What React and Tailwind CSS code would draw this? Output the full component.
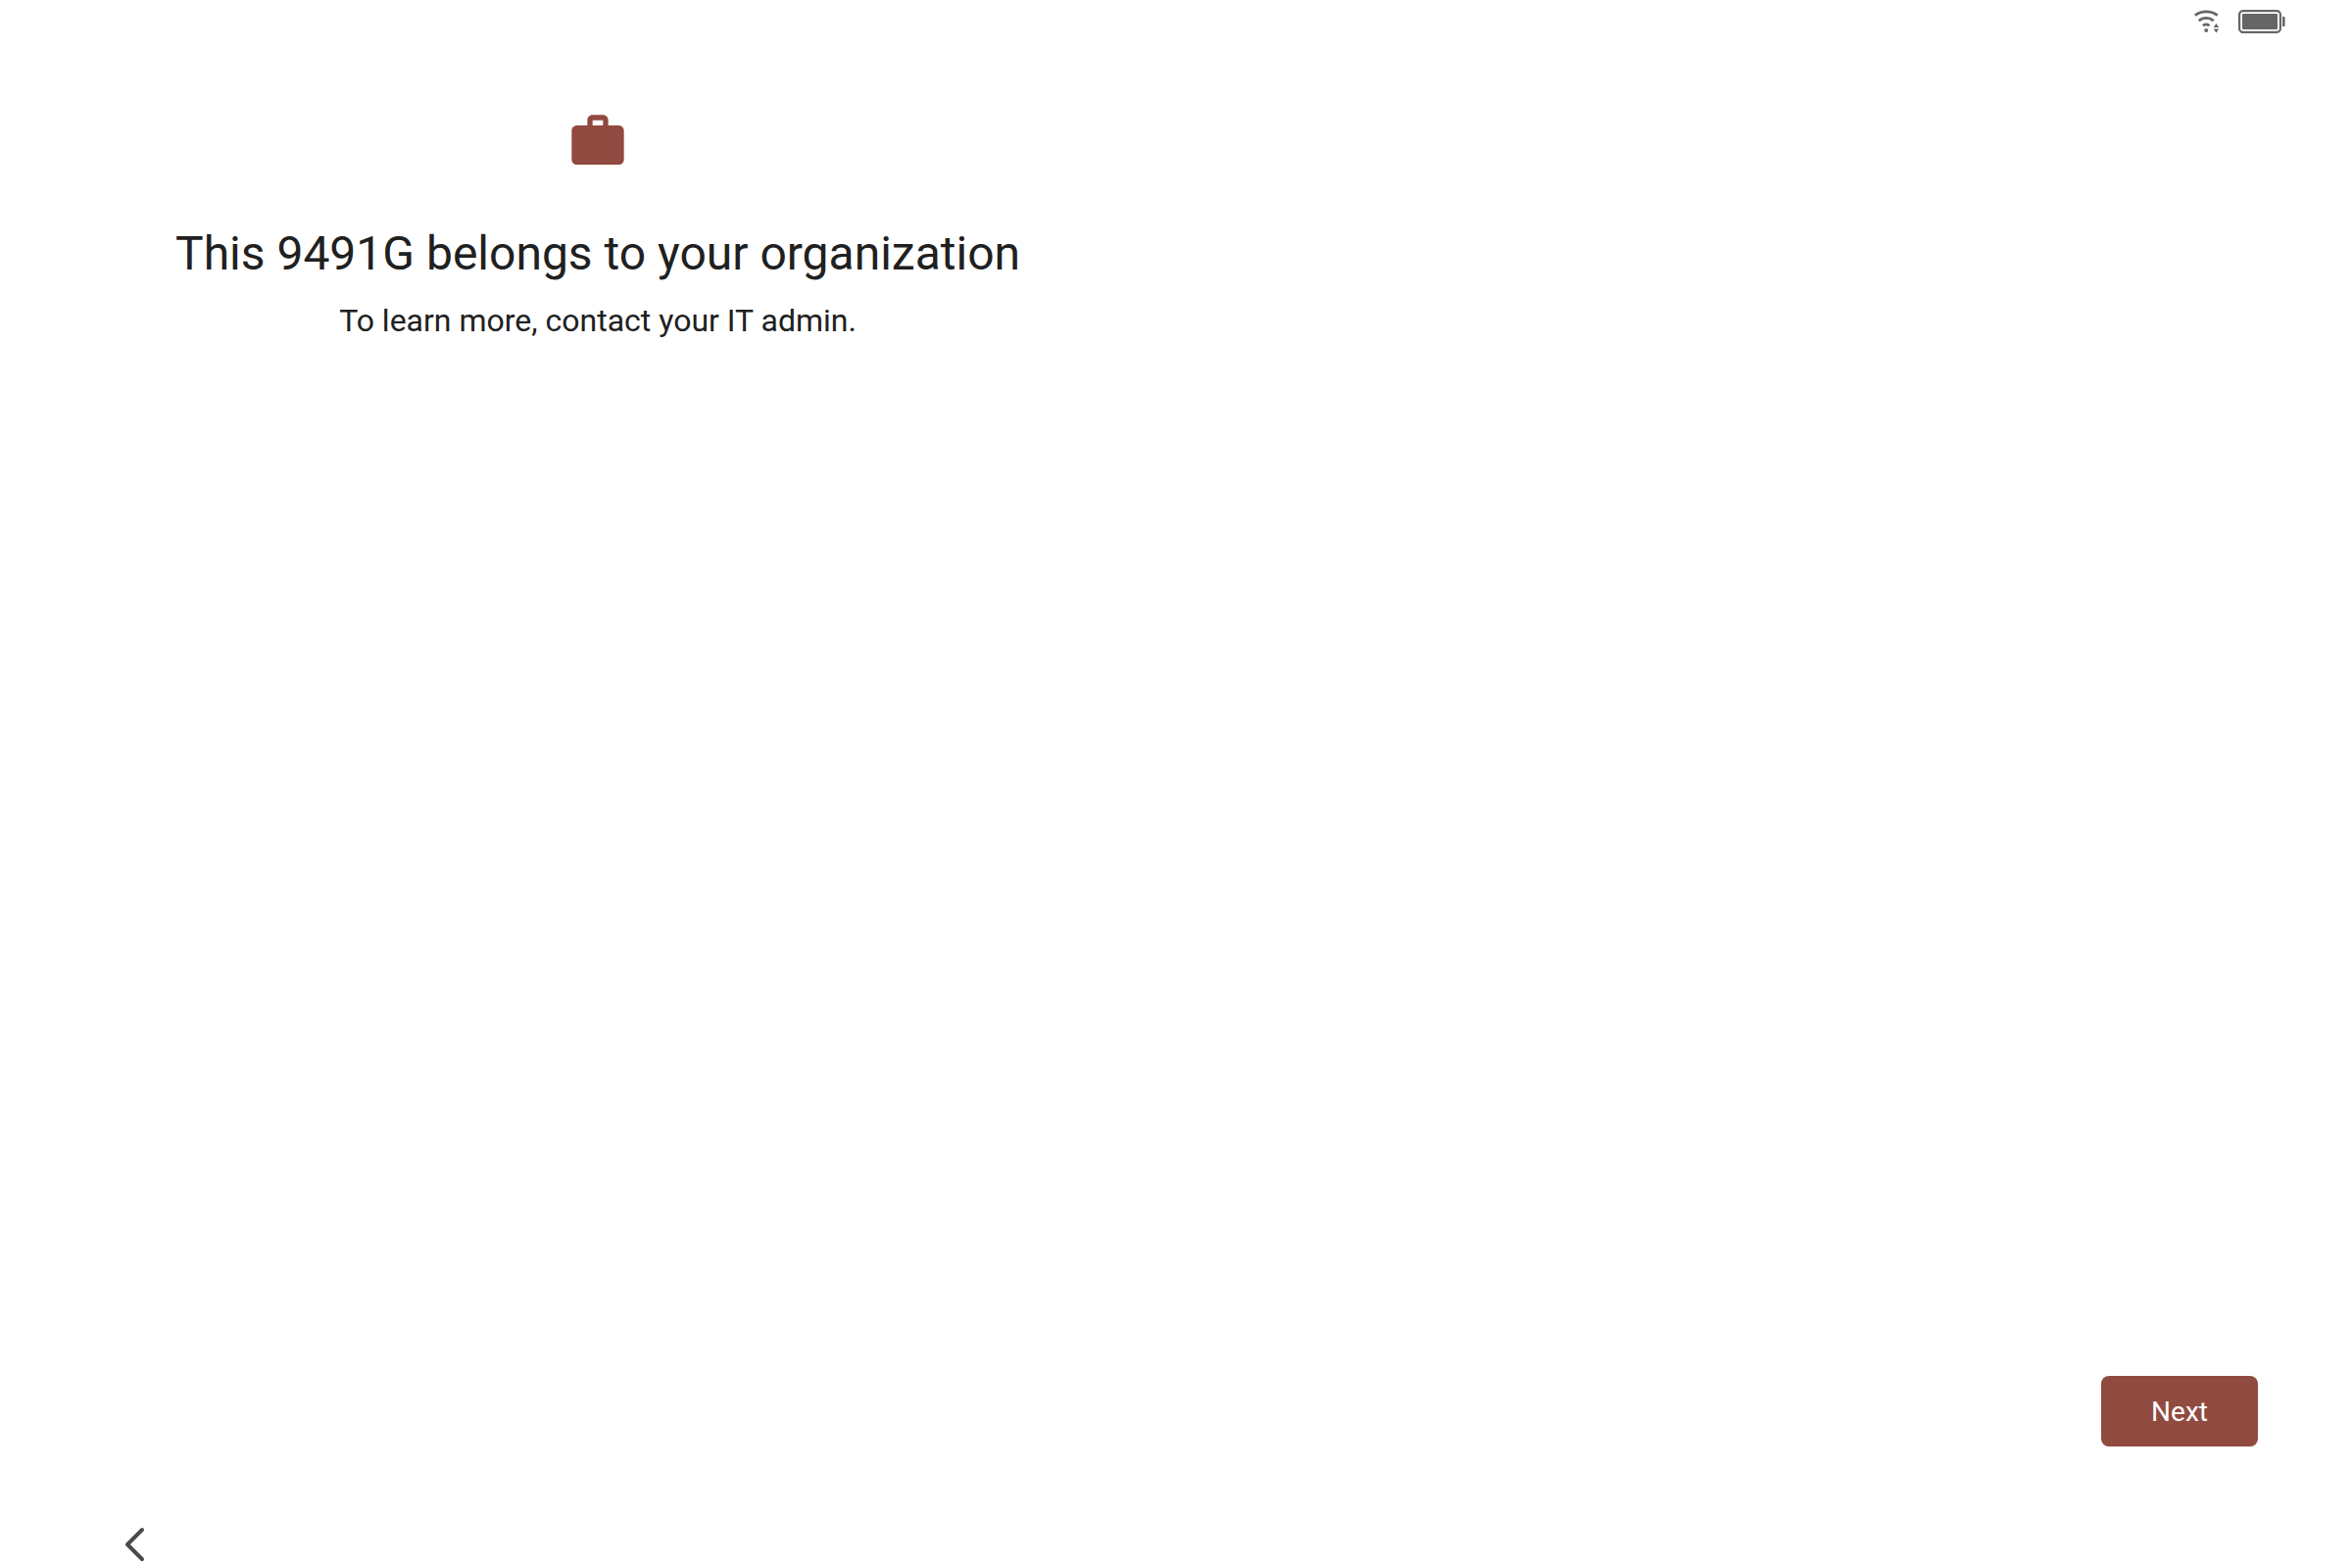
import React from "react";

function WifiIcon() {
  return (
    <svg className="w-8 h-8" viewBox="0 0 32 32" fill="none" stroke="#666666" role="img" aria-label="Wi-Fi connected">
      <path d="M3.8 9.6a20 20 0 0 1 23 0" strokeWidth="2.8" />
      <path d="M7.7 15.1a11.5 11.5 0 0 1 15 0" strokeWidth="2.8" />
      <path d="M12 20.2a4.4 4.4 0 0 1 6.4 0" strokeWidth="2.8" />
      <circle cx="15.2" cy="25" r="2" fill="#666666" stroke="none" />
      <path d="M25.4 18l2.7 4h-5.4zM25.4 27.5l2.7-4h-5.4z" fill="#666666" stroke="none" />
    </svg>
  );
}

function BatteryIcon() {
  return (
    <svg className="w-12 h-8" viewBox="0 0 48 32" role="img" aria-label="Battery full">
      <rect x="1.1" y="5.1" width="41.8" height="21.8" rx="3.6" fill="none" stroke="#666666" strokeWidth="2.2" />
      <rect x="4" y="8" width="36" height="16" rx="1" fill="#666666" />
      <path d="M45 11h1.6a1 1 0 0 1 1 1v8a1 1 0 0 1-1 1H45z" fill="#666666" />
    </svg>
  );
}

function WorkIcon() {
  return (
    <svg className="w-16 h-16" viewBox="0 0 24 24" fill="#904a40" aria-hidden="true">
      <path d="M20 6h-4V4c0-1.11-.89-2-2-2h-4c-1.11 0-2 .89-2 2v2H4c-1.11 0-2 .89-2 2v11c0 1.11.89 2 2 2h16c1.11 0 2-.89 2-2V8c0-1.11-.89-2-2-2zM14 6h-4V4h4v2z" />
    </svg>
  );
}

function App() {
  return (
    <div className="flex flex-col min-h-screen bg-white font-['Roboto',sans-serif] text-[#202020]">
      {/* Status bar */}
      <header className="flex items-center justify-end gap-4 h-11 pr-17">
        <WifiIcon />
        <BatteryIcon />
      </header>

      {/* Message */}
      <main className="flex-1 w-1/2 flex flex-col items-center pt-17 pl-12 pr-7 text-center">
        <WorkIcon />
        <h1 className="mt-13 text-5xl leading-[62px]">This 9491G belongs to your organization</h1>
        <p className="mt-4 text-[32px] leading-[42px]">To learn more, contact your IT admin.</p>
      </main>

      {/* Bottom actions */}
      <div className="flex justify-end px-24 pb-19">
        <button type="button" className="w-40 h-18 pt-0.5 rounded-lg bg-[#904a40] text-white text-[28px]">
          Next
        </button>
      </div>

      {/* Navigation bar */}
      <nav className="flex items-center h-12 px-28">
        <button type="button" aria-label="Back" className="w-12 h-12">
          <svg viewBox="0 0 48 48" fill="none" stroke="#4a4a4a" strokeWidth="4" strokeLinecap="round" strokeLinejoin="round">
            <path d="M33 9L18 24L33 39" />
          </svg>
        </button>
      </nav>
    </div>
  );
}

export default App;
